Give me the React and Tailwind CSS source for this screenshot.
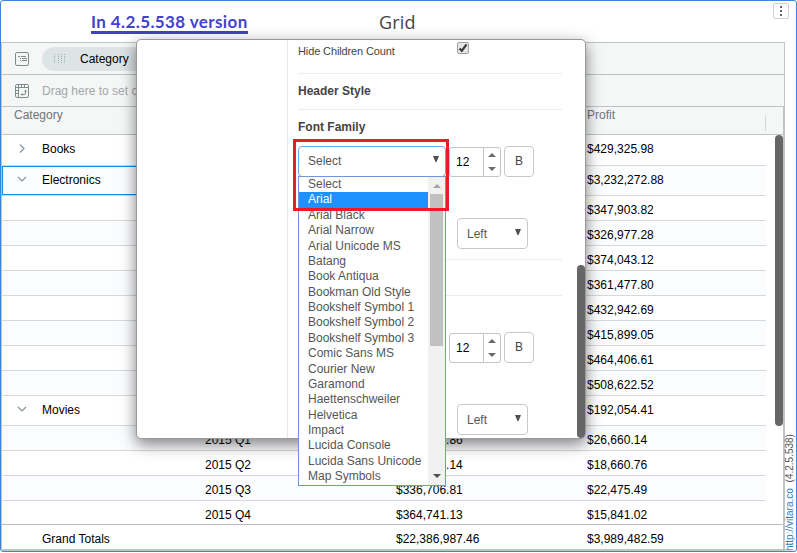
const rows = [
  { label: 'Books', icon: 'right', profit: '$429,325.98', h: 'h-[31px]' },
  { label: 'Electronics', icon: 'down', profit: '$3,232,272.88', h: 'h-[30px]', selected: true },
  { profit: '$347,903.82' },
  { profit: '$326,977.28' },
  { profit: '$374,043.12' },
  { profit: '$361,477.80' },
  { profit: '$432,942.69' },
  { profit: '$415,899.05' },
  { profit: '$464,406.61' },
  { profit: '$508,622.52' },
  { label: 'Movies', icon: 'down', profit: '$192,054.41', h: 'h-[30px]' },
  { quarter: '2015 Q1', revenue: '$326,518.86', profit: '$26,660.14' },
  { quarter: '2015 Q2', revenue: '$331,204.14', profit: '$18,660.76' },
  { quarter: '2015 Q3', revenue: '$336,706.81', profit: '$22,475.49' },
  { quarter: '2015 Q4', revenue: '$364,741.13', profit: '$15,841.02', last: true },
];

const fonts = [
  'Select', 'Arial', 'Arial Black', 'Arial Narrow', 'Arial Unicode MS', 'Batang', 'Book Antiqua',
  'Bookman Old Style', 'Bookshelf Symbol 1', 'Bookshelf Symbol 2', 'Bookshelf Symbol 3',
  'Comic Sans MS', 'Courier New', 'Garamond', 'Haettenschweiler', 'Helvetica', 'Impact',
  'Lucida Console', 'Lucida Sans Unicode', 'Map Symbols',
];

function Chevron({ dir }) {
  return (
    <svg width="10" height="10" viewBox="0 0 10 10" fill="none" stroke="#85949a" strokeWidth="1.2">
      {dir === 'right' ? <path d="M3 0.500l4 4-4 4" /> : <path d="M1 3l4 4 4-4" />}
    </svg>
  );
}

function RowsIcon() {
  return (
    <svg width="14" height="14" viewBox="0 0 14 14" fill="none" stroke="#7f8c8d">
      <rect x=".5" y=".5" width="13" height="13" rx="1.5" />
      <path d="M3 4.500h2M6 4.500h5M5 6.500h1M7 6.500h5M5 8.500h1M7 8.500h5" />
    </svg>
  );
}

function ColumnsIcon() {
  return (
    <svg width="14" height="14" viewBox="0 0 14 14" fill="none" stroke="#7f8c8d">
      <rect x=".5" y=".5" width="13" height="13" rx="1.5" />
      <path d="M1 3.500h12M3.500 1v12M6.500 1v2M9.500 1v2M1 6.500h2M1 9.500h2" />
      <path d="M6 10.500h3q1.500 0 1.500-1.500V6" />
      <path d="M7.500 9v3L5.500 10.500zM9 7.500h3L10.500 5.500z" fill="#7f8c8d" stroke="none" />
    </svg>
  );
}

function Caret() {
  return (
    <svg className="mb-[3px]" width="8" height="6" viewBox="0 0 8 6" fill="#4f4f4f">
      <path d="M1 0h6L4.500 6h-1z" />
    </svg>
  );
}

function Stepper() {
  return (
    <div className="flex h-[30px] w-[52px] rounded-[3px] border border-[#c4c4c4] bg-white text-black">
      <div className="flex flex-1 items-center border-r border-[#c4c4c4] pl-[6px] text-[12px]">12</div>
      <div className="flex w-4 flex-col items-center justify-center gap-[10px]">
        <svg width="8" height="4" viewBox="0 0 8 4" fill="#6b6b6b"><path d="M0 4l4-4 4 4z" /></svg>
        <svg width="8" height="4" viewBox="0 0 8 4" fill="#6b6b6b"><path d="M0 0l4 4 4-4z" /></svg>
      </div>
    </div>
  );
}

function BoldButton() {
  return (
    <button className="h-[31px] w-[30px] rounded-[4px] border border-[#c8c8c8] bg-white pb-[2px] text-[12px] text-[#444]">B</button>
  );
}

function AlignSelect() {
  return (
    <div className="ml-[159px] flex h-[31px] w-[71px] items-center justify-between rounded-[4px] border border-[#c8c8c8] pl-[9px] pr-[5px] text-[12px] text-[#555]">
      <span>Left</span>
      <Caret />
    </div>
  );
}

function Row({ row, odd }) {
  const line = row.last ? '' : 'border-b border-[#d5d9dd]';
  const height = row.h || 'h-[25px]';
  const pad = row.label ? 'pb-[2px]' : 'pt-[3px]';
  return (
    <div className={`relative flex w-[764px] shrink-0 items-center ${line} ${height} ${pad} ${odd ? 'bg-[#fbfcfe]' : 'bg-white'}`}>
      {row.selected && <div className="absolute left-0 top-0 h-[29px] w-[191px] border border-[#0e8fe6]" />}
      <div className="flex w-[191px] items-center">
        {row.label && (
          <>
            <span className="-mt-[1px] ml-[15px] mr-[15px]"><Chevron dir={row.icon} /></span>
            <span>{row.label}</span>
          </>
        )}
      </div>
      <div className="w-[191px] pl-3">{row.quarter}</div>
      <div className="w-[191px] pl-3">{row.revenue}</div>
      <div className="pl-3">{row.profit}</div>
    </div>
  );
}

function Grid() {
  return (
    <div className="flex h-[509px] w-[784px] shrink-0 flex-col border-b-2 border-l border-[#bdc3c7] text-[12px] leading-[14px] text-black">
      <div className="flex h-16 shrink-0 flex-col border-r border-t border-[#bdc3c7] bg-[#f5f7f7]">
        <div className="flex h-[32px] items-center border-b border-[#bdc3c7] pl-[13px]">
          <RowsIcon />
          <div className="ml-[13px] flex h-6 w-[130px] items-center rounded-full bg-[#dde4e6] pl-3">
            <svg width="12" height="9" viewBox="0 0 12 9" stroke="#a3adb0" strokeDasharray="1 1">
              <path d="M.5 0v9M4.500 0v9M7.500 0v9M10.500 0v9" />
            </svg>
            <span className="ml-[14px]">Category</span>
          </div>
        </div>
        <div className="flex flex-1 items-center pl-[13px]">
          <ColumnsIcon />
          <span className="ml-[13px] text-[#a3a7a8]">Drag here to set column labels</span>
        </div>
      </div>
      <div className="flex h-[29px] shrink-0 border-y border-r-2 border-[#bdc3c7] bg-[#f5f7f7] pt-[1px] text-[#6f7476]">
        <div className="w-[573px] pl-3">Category</div>
        <div className="w-[191px] pl-3">Profit</div>
        <div className="-ml-px mt-[7px] h-4 border-l border-[#d3d7d9]" />
      </div>
      <div className="flex min-h-0 flex-1 flex-col border-r-2 border-[#bdc3c7]">
        <div className="flex h-[389px] shrink-0 overflow-hidden">
          <div className="flex flex-col">
            {rows.map((r, i) => <Row key={i} row={r} odd={i % 2 === 1} />)}
          </div>
          <div className="ml-[9px] h-[291px] w-2 rounded-full bg-[#666]" />
        </div>
        <div className="flex flex-1 items-center border-t border-[#b9bdc0] pt-[3px]">
          <div className="w-[382px] pl-10">Grand Totals</div>
          <div className="w-[191px] pl-3">$22,386,987.46</div>
          <div className="pl-3">$3,989,482.59</div>
        </div>
      </div>
    </div>
  );
}

function FontList() {
  return (
    <div className="absolute left-[298px] top-[176px] flex h-[310px] w-[148px] border border-[#7195d8] bg-white text-[12px] text-[#555]">
      <div className="flex w-[129px] shrink-0 flex-col">
        {fonts.map((f) => (
          <div key={f} className={`h-[15.38px] whitespace-nowrap pl-[9px] leading-[15.38px] ${f === 'Arial' ? 'bg-[#1e90ff] text-white' : ''}`}>{f}</div>
        ))}
      </div>
      <div className="flex flex-1 flex-col items-center bg-[#f1f1f1] pb-[7px] pt-[7px]">
        <svg width="8" height="4" viewBox="0 0 8 4" fill="#a3a3a3"><path d="M0 4l4-4 4 4z" /></svg>
        <div className="mb-auto mr-px mt-[6px] h-[152px] w-[13px] bg-[#c1c1c1]" />
        <svg width="8" height="4" viewBox="0 0 8 4" fill="#505050"><path d="M0 0l4 4 4-4z" /></svg>
      </div>
    </div>
  );
}

function Dialog() {
  return (
    <div className="absolute left-[136px] top-[39px] flex h-[400px] w-[450px] overflow-hidden rounded-[5px] border border-[#999] bg-white text-[#444] shadow-[0_5px_15px_rgba(0,0,0,0.5)]">
      <div className="w-[151px] border-r border-[#e7e7e7]" />
      <div className="ml-[10px] flex w-[264px] flex-col">
        <div className="flex h-[34px] items-start border-b border-[#ececec] text-[11px]">
          <span className="mt-[3px] w-[159px] tracking-[-0.12px]">Hide Children Count</span>
          <span className="mt-[2px] flex h-3 w-3 items-center justify-center rounded-[2px] border border-[#a0a0a0] bg-[#e6e6e6]">
            <svg width="10" height="10" viewBox="0 0 10 10" fill="none" stroke="#3d3d3d" strokeWidth="2.2"><path d="M1.500 5.500l2.300 2.300L8.500 1.500" /></svg>
          </span>
        </div>
        <div className="flex h-9 items-center border-b border-[#ececec] pb-[2px] text-[12px] font-bold">Header Style</div>
        <div className="flex h-9 items-center pb-[2px] text-[12px] font-bold">Font Family</div>
        <div className="flex h-[31px] items-center">
          <div className="flex h-[31px] w-[148px] items-center justify-between rounded-[4px] border border-[#66a9e8] pb-[2px] pl-[9px] pr-[5px] text-[12px] text-[#555]">
            <span>Select</span><Caret />
          </div>
          <div className="ml-[3px] mr-[3px] mt-[1px]"><Stepper /></div>
          <BoldButton />
        </div>
        <div className="h-[41px] shrink-0" />
        <AlignSelect />
        <div className="mt-[10px] h-px shrink-0 bg-[#ececec]" />
        <div className="mt-[35px] h-px shrink-0 bg-[#ececec]" />
        <div className="mt-9 flex h-[31px] items-center pl-[151px]">
          <Stepper /><div className="ml-[3px] h-[31px]"><BoldButton /></div>
        </div>
        <div className="h-[41px] shrink-0" />
        <AlignSelect />
      </div>
      <div className="ml-auto mt-[225px] h-[173px] w-2 rounded-full bg-[#666]" />
    </div>
  );
}

export default function App() {
  return (
    <div className="relative h-[553px] w-[797px] overflow-hidden bg-white font-['Liberation_Sans',Arial,sans-serif]">
      <div className="flex h-[552px] flex-col rounded-[3px] border border-[#3a86d9]">
        <div className="flex h-[41px] shrink-0 justify-between">
          <div className="ml-[90px] mt-[11px] h-[22px] w-[157px] whitespace-nowrap border-b-[3px] border-[#4141c8] font-['Lato',sans-serif] text-[17px] font-bold leading-[22px] tracking-[0.39px] text-[#4343c9]"><span className="block -mt-[1px]">In 4.2.5.538 version</span></div>
          <div className="ml-[131px] mr-auto mt-[9px] font-['Open_Sans',sans-serif] text-[18px] leading-6 tracking-[0.2px] text-[#444]">Grid</div>
          <div className="mr-[7px] mt-[2px] flex h-4 w-4 flex-col items-center justify-center gap-[2px] rounded-[2px] border border-[#d0d0d0]">
            <i className="h-0.5 w-0.5 bg-[#666]" /><i className="h-0.5 w-0.5 bg-[#666]" /><i className="h-0.5 w-0.5 bg-[#666]" />
          </div>
        </div>
        <div className="flex">
          <Grid />
          <div className="-ml-px flex w-[11px] rotate-180 items-center whitespace-pre text-[10px] leading-[11px] text-[#555] [writing-mode:vertical-rl]">
            <span className="text-[#2b7bb9]">http://vitara.co</span>{'  (4.2.5.538)'}
          </div>
        </div>
      </div>
      <Dialog />
      <FontList />
      <div className="absolute left-[293px] top-[139px] h-[72px] w-[156px] border-[3px] border-[#ed1c24]" />
    </div>
  );
}
